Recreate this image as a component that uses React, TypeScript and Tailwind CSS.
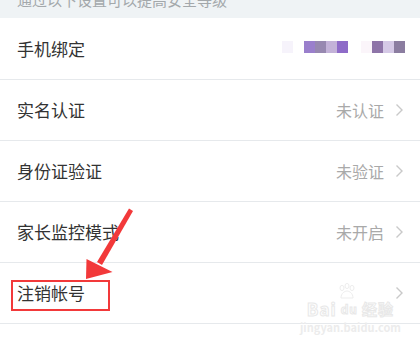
import React from "react";

const rows = [
  { label: "实名认证", value: "未认证" },
  { label: "身份证验证", value: "未验证" },
  { label: "家长监控模式", value: "未开启" },
  { label: "注销帐号", value: "" },
];

function Chevron() {
  return (
    <svg width="9" height="14" viewBox="0 0 9 14" className="shrink-0">
      <polyline points="1.5,1.5 7,7 1.5,12.5" fill="none" stroke="#c9c9c9" strokeWidth="1.4" />
    </svg>
  );
}

// pixelated phone number blocks
const mosaic = [
  ["#f6f3fb"],
  ["#9a7fcc", "#9788b0", "#c3b2d8", "#8e6bc8"],
  ["#fbf5fa", "#8e74a8", "#d5c9e6", "#8b7da0"],
];

export default function App() {
  return (
    <div
      className="relative w-[420px] h-[354px] overflow-hidden bg-white"
      style={{ fontFamily: '"Noto Sans CJK SC", "Noto Sans", sans-serif' }}
    >
      {/* section hint, cut off at the top */}
      <div className="h-[18px] bg-[#eff3f5] overflow-hidden px-[17px]">
        <p className="-mt-[8px] text-[15px] leading-[15px] text-[#a3a8ab]">
          通过以下设置可以提高安全等级
        </p>
      </div>

      {/* phone binding */}
      <div className="flex items-center justify-between h-[62px] px-[17px] border-b border-[#e6e9ec]">
        <span className="text-[17px] text-[#333]">手机绑定</span>
        <div className="flex items-center h-[12px] mt-[-4px] mr-[-2px]">
          <div className="flex h-full">
            {mosaic[0].map((c, i) => (
              <div key={i} className="w-[11px] h-full" style={{ background: c }} />
            ))}
          </div>
          <div className="flex h-full ml-[11px]">
            {mosaic[1].map((c, i) => (
              <div key={i} className="w-[11px] h-full" style={{ background: c }} />
            ))}
          </div>
          <div className="flex h-full ml-[13px]">
            {mosaic[2].map((c, i) => (
              <div key={i} className="w-[11px] h-full" style={{ background: c }} />
            ))}
          </div>
        </div>
      </div>

      {rows.map((r) => (
        <div
          key={r.label}
          className="flex items-center justify-between h-[61px] pl-[17px] pr-[16px] border-b border-[#e6e9ec]"
        >
          <span className="text-[17px] text-[#333]">{r.label}</span>
          <div className="flex items-center gap-[11px]">
            {r.value && <span className="text-[16px] text-[#a9a9a9]">{r.value}</span>}
            <Chevron />
          </div>
        </div>
      ))}

      {/* baidu watermark */}
      <div className="absolute left-[300px] top-[283px] flex flex-col items-center pointer-events-none">
        <svg width="20" height="18" viewBox="0 0 20 18" className="ml-[-6px]">
          <g fill="none" stroke="#ededed" strokeWidth="1">
            <ellipse cx="5" cy="5" rx="2" ry="2.6" />
            <ellipse cx="10" cy="3" rx="2" ry="2.6" />
            <ellipse cx="15" cy="5" rx="2" ry="2.6" />
            <path d="M4 15 C4 10 8 8 10 8 C12 8 16 10 16 15 Z" />
          </g>
        </svg>
        <div className="flex items-center text-[17px] leading-[16px] font-bold text-white [-webkit-text-stroke:1px_#e8e8e8] tracking-[1px]">
          <span>Bai</span>
          <span className="mx-[2px] text-[12px] px-[2px]">du</span>
          <span className="text-[15px]">经验</span>
        </div>
        <div className="text-[11px] leading-[13px] mt-[4px] text-[#ececec] font-bold">
          jingyan.baidu.com
        </div>
      </div>

      {/* annotation */}
      <div className="absolute left-[11px] top-[280px] w-[99px] h-[31px] border-2 border-[#f2393a] pointer-events-none" />
      <svg
        className="absolute left-0 top-0 pointer-events-none"
        width="420"
        height="354"
        viewBox="0 0 420 354"
      >
        <path d="M129 208.5 L133 211 L102 265 L97 262 Z" fill="#f2393a" />
        <path d="M86 279 L86.5 259 L112.5 272 Z" fill="#f2393a" />
      </svg>
    </div>
  );
}
